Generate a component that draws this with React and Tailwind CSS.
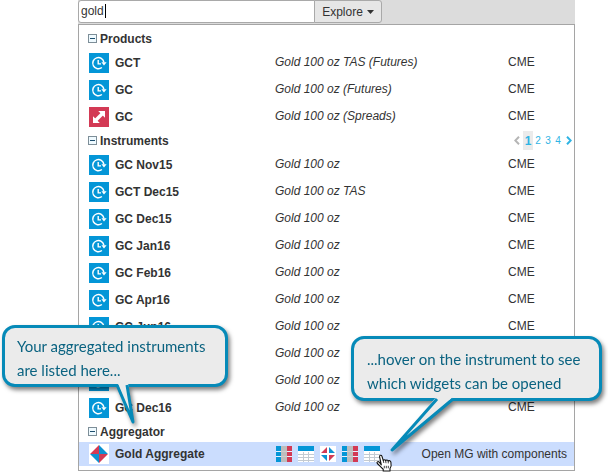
import React from "react";

const products = [
  { name: "GCT", kind: "future", description: "Gold 100 oz TAS (Futures)" },
  { name: "GC", kind: "future", description: "Gold 100 oz (Futures)" },
  { name: "GC", kind: "spread", description: "Gold 100 oz (Spreads)" },
];

const instruments = [
  { name: "GC Nov15", kind: "future", description: "Gold 100 oz" },
  { name: "GCT Dec15", kind: "future", description: "Gold 100 oz TAS" },
  { name: "GC Dec15", kind: "future", description: "Gold 100 oz" },
  { name: "GC Jan16", kind: "future", description: "Gold 100 oz" },
  { name: "GC Feb16", kind: "future", description: "Gold 100 oz" },
  { name: "GC Apr16", kind: "future", description: "Gold 100 oz" },
  { name: "GC Jun16", kind: "future", description: "Gold 100 oz" },
  { name: "GC Aug16", kind: "future", description: "Gold 100 oz" },
  { name: "GC Oct16", kind: "future", description: "Gold 100 oz" },
  { name: "GC Dec16", kind: "future", description: "Gold 100 oz" },
];

function FutureIcon() {
  return (
    <svg viewBox="0 0 20 20" className="block size-5" aria-hidden="true">
      <rect width="20" height="20" fill="#0496d7" />
      <path d="M14.9 9.4A5.6 5.6 0 1 0 12.9 14.5" fill="none" stroke="#fff" strokeWidth="1.5" />
      <path d="M12.4 9.2H17.6L15 12.4Z" fill="#fff" />
      <path d="M9.2 7V10.9H12" fill="none" stroke="#fff" strokeWidth="1.4" />
    </svg>
  );
}

function SpreadIcon() {
  return (
    <svg viewBox="0 0 20 20" className="block size-5" aria-hidden="true">
      <rect width="20" height="20" fill="#d33a55" />
      <path d="M6.5 13.5L13.5 6.5" stroke="#fff" strokeWidth="3.4" />
      <path d="M9.2 4H16V10.8ZM4 9.2V16H10.8Z" fill="#fff" />
    </svg>
  );
}

function AggregateIcon() {
  return (
    <svg viewBox="0 0 20 20" className="block size-5" aria-hidden="true">
      <rect width="20" height="20" fill="#fff" />
      <path d="M10 1V10H1ZM10 19V10H19Z" fill="#d33a55" />
      <path d="M10 1V10H19ZM10 19V10H1Z" fill="#0b92d2" />
    </svg>
  );
}

function LadderIcon() {
  return (
    <svg viewBox="0 0 16 16" className="block size-4" aria-hidden="true">
      <path d="M0 0H5V16H0Z" fill="#0496d7" />
      <path d="M5 0H11V16H5Z" fill="#bdbdbd" />
      <path d="M11 0H16V16H11Z" fill="#d33a55" />
      <path d="M0 5H5V6H0ZM0 10H5V11H0ZM11 5H16V6H11ZM11 10H16V11H11Z" fill="#e8f1ff" />
      <path d="M5 5H11V6H5ZM5 10H11V11H5Z" fill="#cdcdcd" />
    </svg>
  );
}

function GridIcon() {
  return (
    <svg viewBox="0 0 16 16" className="block size-4" aria-hidden="true">
      <rect width="16" height="16" fill="#fff" />
      <rect width="16" height="5" fill="#0496d7" />
      <path d="M0 8.5H16M0 11.5H16M0 14.5H16M5.5 6V16M10.5 6V16" stroke="#c4cbd2" />
    </svg>
  );
}

function SpreadMatrixIcon() {
  return (
    <svg viewBox="0 0 16 16" className="block size-4" aria-hidden="true">
      <rect width="16" height="16" fill="#fff" />
      <path d="M7 1V7H1ZM9 15V9H15Z" fill="#d33a55" />
      <path d="M9 1V7H15ZM7 15V9H1Z" fill="#0b92d2" />
    </svg>
  );
}

const widgets = [
  { label: "Ladder", Icon: LadderIcon },
  { label: "Market grid", Icon: GridIcon },
  { label: "Spread matrix", Icon: SpreadMatrixIcon },
  { label: "Component ladders", Icon: LadderIcon },
  { label: "Component market grid", Icon: GridIcon },
];

function SectionHeader({ title, children }) {
  return (
    <div className="flex h-[21px] items-center pr-[2px] pl-[9px]">
      <button type="button" className="flex items-center gap-[3px] font-bold">
        <svg viewBox="0 0 9 9" className="size-[9px]" aria-hidden="true">
          <rect x="0.5" y="0.5" width="8" height="8" fill="#effaff" stroke="#7d8e98" />
          <path d="M2 4.5H7" stroke="#1d4e6e" />
        </svg>
        {title}
      </button>
      {children}
    </div>
  );
}

function ResultTable({ label, rows }) {
  return (
    <table className="w-full table-fixed border-collapse text-left" aria-label={label}>
      <colgroup>
        <col className="w-[36px]" />
        <col className="w-[160px]" />
        <col />
        <col className="w-[66px]" />
      </colgroup>
      <tbody>
        {rows.map((row, i) => (
          <tr key={i} className="h-[27px]">
            <td className="pt-1 pb-[3px] pl-[10px]">
              {row.kind === "spread" ? <SpreadIcon /> : <FutureIcon />}
            </td>
            <th scope="row" className="font-bold">{row.name}</th>
            <td className="pb-px italic">{row.description}</td>
            <td className="pb-px">CME</td>
          </tr>
        ))}
      </tbody>
    </table>
  );
}

function Pager() {
  return (
    <nav className="ml-auto flex items-center text-[10px] text-[#2fb4e4]" aria-label="Instrument pages">
      <button type="button" aria-label="Previous page" className="mr-[3px] text-[#b5b5b5]">
        <svg viewBox="0 0 6 9" className="h-[9px] w-[6px]">
          <path d="M5 0.8L1.3 4.5L5 8.2" fill="none" stroke="currentColor" strokeWidth="2" />
        </svg>
      </button>
      <a href="#1" className="flex h-[19px] w-[10px] items-center justify-center bg-[#ebebeb] text-xs font-bold">1</a>
      <a href="#2" className="w-[10px] text-center">2</a>
      <a href="#3" className="w-[10px] text-center">3</a>
      <a href="#4" className="w-[10px] text-center">4</a>
      <button type="button" aria-label="Next page" className="ml-[3px]">
        <svg viewBox="0 0 6 9" className="h-[9px] w-[6px]">
          <path d="M1 0.8L4.7 4.5L1 8.2" fill="none" stroke="currentColor" strokeWidth="2" />
        </svg>
      </button>
    </nav>
  );
}

function Callout({ className, bubble, tail, children }) {
  return (
    <div className={"absolute drop-shadow-[2px_3px_2px_rgba(0,0,0,0.5)] " + className}>
      <p className={"rounded-[13px] border-[3px] border-[#068ab8] bg-[#ebebeb] font-[Lato,sans-serif] text-[15px] leading-6 whitespace-nowrap text-[#0b6381] " + bubble}>
        {children}
      </p>
      {tail}
    </div>
  );
}

function HandCursor() {
  return (
    <svg viewBox="0 0 17 18" className="absolute top-2 left-3 h-[18px] w-[17px]" aria-hidden="true">
      <path
        d="M5.3 10.8L3.6 2.8C3.3 1.2 5.4.7 5.9 2.2L7.3 6.7C7.5 5.5 9.2 5.4 9.7 6.7C10.2 5.6 11.8 5.8 12.2 7C13.2 6.2 14.6 6.8 14.9 8.2C15.5 11 15.4 12.7 14 14.5V17H7.2V15.3C5 13.5 3.7 11.8 1.4 9.5C.2 8.1 2 6.9 3.3 8.2L5.3 10.8Z"
        fill="#fff"
        stroke="#111"
        strokeWidth="1.1"
        strokeLinejoin="round"
      />
      <path d="M7.3 6.7L7.8 9M9.7 6.8L10 9.2M12.2 7L12.3 9.4M8.3 11.8V14.3M10.3 11.8V14.3M12.3 11.8V14.3" stroke="#111" strokeWidth="0.8" />
    </svg>
  );
}

export default function App() {
  return (
    <div className="relative bg-white pr-[33px] pb-px pl-[78px] font-['Liberation_Sans',Arial,sans-serif] text-xs leading-4 text-[#333]">
      <form className="flex h-6 items-start bg-[#dcdcdc]" role="search">
        <div className="relative flex">
          <input
            type="text"
            aria-label="Search instruments"
            defaultValue="gold"
            className="h-[23px] w-[237px] rounded-l-[3px] border border-[#a9a9a9] bg-white pb-px pl-[2px] outline-none"
          />
          <span className="absolute top-1 left-[27px] h-[14px] w-px bg-black" />
        </div>
        <button
          type="button"
          className="-ml-px flex h-[23px] w-[68px] items-center justify-center gap-1 rounded-r-[3px] border border-[#a9a9a9] bg-[#e6e6e6]"
        >
          Explore
          <svg viewBox="0 0 7 4" className="h-1 w-[7px]" aria-hidden="true">
            <path d="M0 0H7L3.5 4Z" fill="#333" />
          </svg>
        </button>
      </form>

      <main className="border border-[#a5a5a5] pt-[3px] pb-1">
        <section>
          <SectionHeader title="Products" />
          <ResultTable label="Products" rows={products} />
        </section>
        <section>
          <SectionHeader title="Instruments">
            <Pager />
          </SectionHeader>
          <ResultTable label="Instruments" rows={instruments} />
        </section>
        <section>
          <SectionHeader title="Aggregator" />
          <div className="flex h-6 items-center bg-[#cbddfe] pr-[7px] pl-[10px]">
            <div className="flex w-[187px] items-center gap-[6px] font-bold">
              <AggregateIcon />
              Gold Aggregate
            </div>
            <div className="flex gap-[6px]">
              {widgets.map(({ label, Icon }, i) => (
                <button key={label} type="button" aria-label={label} className="relative w-4">
                  <Icon />
                  {i === widgets.length - 1 && <HandCursor />}
                </button>
              ))}
            </div>
            <span className="ml-auto pb-px">Open MG with components</span>
          </div>
        </section>
      </main>

      <Callout
        className="top-[325px] left-[2px]"
        bubble="h-[62px] w-[226px] pt-[6px] pl-3"
        tail={
          <svg viewBox="0 0 24 46" className="absolute top-[57px] left-[111px] h-[46px] w-6" aria-hidden="true">
            <path d="M4 0L20 39L15 0Z" fill="#ebebeb" />
            <path d="M4 3L20 40L14 3" fill="none" stroke="#068ab8" strokeWidth="3" strokeLinejoin="round" />
            <path d="M5 0H13V3H6Z" fill="#ebebeb" />
          </svg>
        }
      >
        Your aggregated instruments
        <br />
        are listed here...
      </Callout>

      <Callout
        className="top-[336px] left-[351px]"
        bubble="h-[65px] w-[251px] pt-2 pl-[13px]"
        tail={
          <svg viewBox="0 0 70 60" className="absolute top-[60px] left-[36px] h-[60px] w-[70px]" aria-hidden="true">
            <path d="M50 0L5 54L68 0Z" fill="#ebebeb" />
            <path d="M50 3L5 54L66 3" fill="none" stroke="#068ab8" strokeWidth="3" strokeLinejoin="round" />
            <path d="M52 0H66L62 4H51Z" fill="#ebebeb" />
          </svg>
        }
      >
        ...hover on the instrument to see
        <br />
        which widgets can be opened
      </Callout>
    </div>
  );
}
